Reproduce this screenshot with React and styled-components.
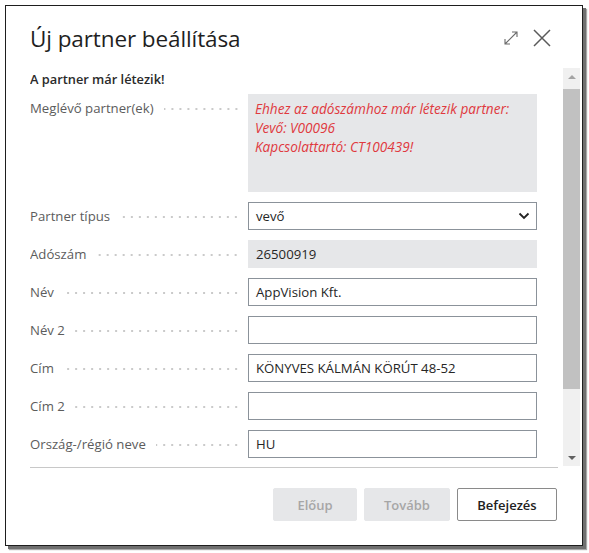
import React from "react";
import styled, { createGlobalStyle } from "styled-components";

const GlobalStyle = createGlobalStyle`
  html, body {
    margin: 0;
    padding: 0;
    background: #ffffff;
  }
  body {
    font-family: "Open Sans", "Noto Sans", "Liberation Sans", sans-serif;
    color: #212121;
  }
`;

const Page = styled.div`
  width: 589px;
  height: 553px;
  padding: 5px 0 0 5px;
  box-sizing: border-box;
`;

const Dialog = styled.div`
  width: 578px;
  height: 541px;
  box-sizing: border-box;
  border: 1px solid #1e1e1e;
  background: #ffffff;
  box-shadow: 3px 3px 0 #6f6f6f, 4px 4px 1px #a8a8a8;
  display: flex;
  flex-direction: column;
`;

const Header = styled.div`
  height: 62px;
  display: flex;
  align-items: center;
  padding: 2px 31px 0 24px;
  box-sizing: border-box;
`;

const Title = styled.h1`
  flex: 1;
  margin: 0;
  font-size: 22.5px;
  font-weight: 400;
  color: #1f1f1f;
  letter-spacing: -0.1px;
`;

const HeaderIcons = styled.div`
  display: flex;
  align-items: center;
  gap: 14px;
`;

const Body = styled.div`
  height: 400px;
  display: flex;
  padding-left: 24px;
  padding-right: 2px;
`;

const Content = styled.div`
  flex: 1;
  overflow: hidden;
  border-bottom: 1px solid #c8c8c8;
  margin-right: 5px;
`;

const Notice = styled.div`
  font-size: 12.8px;
  font-weight: 600;
  color: #2a2a2a;
  padding-top: 2px;
  height: 24px;
`;

const Fields = styled.div`
  display: grid;
  grid-template-columns: 210px 289px;
  column-gap: 8px;
  row-gap: 10px;
`;

const LabelCell = styled.div`
  display: flex;
  align-items: ${(p) => (p.$top ? "flex-start" : "center")};
  padding-top: ${(p) => (p.$top ? "5px" : "0")};
  font-size: 13.2px;
  color: #5c5c5c;
  height: ${(p) => (p.$top ? "auto" : "28px")};
`;

const LabelText = styled.span`
  white-space: nowrap;
  margin-right: 10px;
`;

const Dots = styled.span`
  flex: 1;
  height: 10px;
  margin-top: ${(p) => (p.$top ? "5px" : "2px")};
  background-image: radial-gradient(circle, #cacaca 0.9px, transparent 1.3px);
  background-size: 8px 10px;
  background-repeat: repeat-x;
  background-position: right center;
`;

const Input = styled.div`
  height: 28px;
  box-sizing: border-box;
  border: 1px solid ${(p) => (p.$readonly ? "#e6e7e9" : "#8b929a")};
  background: ${(p) => (p.$readonly ? "#e6e7e9" : "#ffffff")};
  display: flex;
  align-items: center;
  padding: 0 7px;
  font-size: 13.2px;
  color: #262626;
  white-space: nowrap;
`;

const Chevron = styled.svg`
  margin-left: auto;
  margin-right: -1px;
`;

const InfoBox = styled.div`
  height: 98px;
  box-sizing: border-box;
  background: #e6e7e9;
  padding: 5px 7px;
  font-size: 13.6px;
  line-height: 19px;
  font-style: italic;
  color: #e0393e;
`;

const Scrollbar = styled.div`
  width: 17px;
  height: 398px;
  background: #f0f0f0;
  display: flex;
  flex-direction: column;
  align-items: center;
`;

const Arrow = styled.div`
  height: 17px;
  width: 17px;
  display: flex;
  align-items: center;
  justify-content: center;
  &::after {
    content: "";
    border-left: 4px solid transparent;
    border-right: 4px solid transparent;
    ${(p) => (p.$down ? "border-top: 4px solid #606060;" : "border-bottom: 4px solid #a3a3a3;")}
  }
`;

const Track = styled.div`
  flex: 1;
  width: 100%;
  padding-top: 4px;
  box-sizing: border-box;
`;

const Thumb = styled.div`
  width: 100%;
  height: 300px;
  background: #c1c1c1;
`;

const Footer = styled.div`
  flex: 1;
  display: flex;
  justify-content: flex-end;
  align-items: flex-start;
  gap: 7px;
  padding: 20px 25px 0 0;
`;

const Button = styled.button`
  height: 33px;
  min-width: ${(p) => p.$width}px;
  box-sizing: border-box;
  font-family: inherit;
  font-size: 13px;
  font-weight: 600;
  border-radius: 2px;
  border: 1px solid ${(p) => (p.$primary ? "#8a8a8a" : "#e6e7e9")};
  background: ${(p) => (p.$primary ? "#ffffff" : "#e6e7e9")};
  color: ${(p) => (p.$primary ? "#212121" : "#a6a6a6")};
  padding: 0 14px;
`;

const fields = [
  { label: "Partner típus", value: "vevő", select: true },
  { label: "Adószám", value: "26500919", readonly: true },
  { label: "Név", value: "AppVision Kft." },
  { label: "Név 2", value: "" },
  { label: "Cím", value: "KÖNYVES KÁLMÁN KÖRÚT 48-52" },
  { label: "Cím 2", value: "" },
  { label: "Ország-/régió neve", value: "HU" },
  { label: "", value: "" },
];

const App = () => (
  <Page>
    <GlobalStyle />
    <Dialog>
      <Header>
        <Title>Új partner beállítása</Title>
        <HeaderIcons>
          <svg width="16" height="16" viewBox="0 0 16 16" fill="none" stroke="#6b6b6b" strokeWidth="1.1">
            <path d="M2 14L14 2M9 2h5v5M2 9v5h5" />
          </svg>
          <svg width="18" height="18" viewBox="0 0 18 18" fill="none" stroke="#5a5a5a" strokeWidth="1.5">
            <path d="M1 1L17 17M17 1L1 17" />
          </svg>
        </HeaderIcons>
      </Header>
      <Body>
        <Content>
          <Notice>A partner már létezik!</Notice>
          <Fields>
            <LabelCell $top>
              <LabelText>Meglévő partner(ek)</LabelText>
              <Dots $top />
            </LabelCell>
            <InfoBox>
              Ehhez az adószámhoz már létezik partner:
              <br />
              Vevő: V00096
              <br />
              Kapcsolattartó: CT100439!
            </InfoBox>
            {fields.map((f, i) => (
              <React.Fragment key={i}>
                <LabelCell>
                  <LabelText>{f.label}</LabelText>
                  <Dots />
                </LabelCell>
                <Input $readonly={f.readonly}>
                  {f.value}
                  {f.select && (
                    <Chevron width="12" height="8" viewBox="0 0 12 8" fill="none" stroke="#222" strokeWidth="1.8">
                      <path d="M1.5 1.5L6 6l4.5-4.5" />
                    </Chevron>
                  )}
                </Input>
              </React.Fragment>
            ))}
          </Fields>
        </Content>
        <Scrollbar>
          <Arrow />
          <Track>
            <Thumb />
          </Track>
          <Arrow $down />
        </Scrollbar>
      </Body>
      <Footer>
        <Button $width={84} disabled>Előup</Button>
        <Button $width={86} disabled>Tovább</Button>
        <Button $width={100} $primary>Befejezés</Button>
      </Footer>
    </Dialog>
  </Page>
);

export default App;
